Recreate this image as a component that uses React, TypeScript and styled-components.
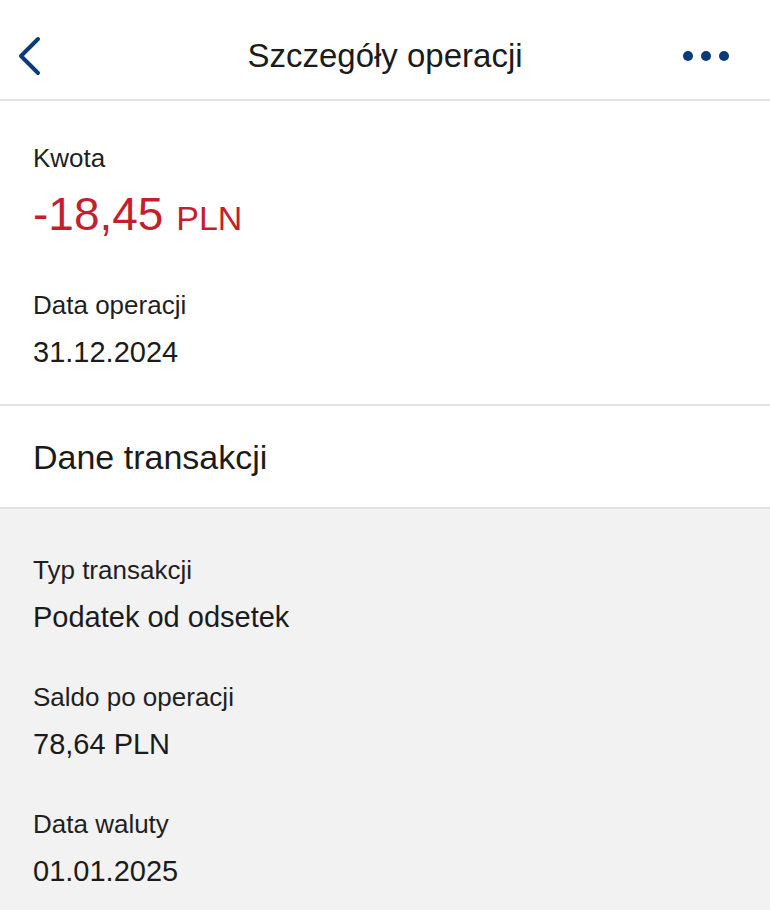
import styled, { createGlobalStyle } from "styled-components";

const GlobalStyle = createGlobalStyle`
  html, body {
    margin: 0;
    padding: 0;
    background: #ffffff;
  }
  body {
    font-family: "Liberation Sans", Arial, sans-serif;
    color: #1b1b1b;
  }
`;

type Field = { label: string; value: string };

const transactionFields: Field[] = [
  { label: "Typ transakcji", value: "Podatek od odsetek" },
  { label: "Saldo po operacji", value: "78,64 PLN" },
  { label: "Data waluty", value: "01.01.2025" },
];

export default function App() {
  return (
    <Page>
      <GlobalStyle />

      {/* nagłówek */}
      <Header>
        <BackButton aria-label="Wstecz">
          <svg width="28" height="40" viewBox="0 0 28 40" fill="none">
            <path
              d="M22 3 L5 20 L22 37"
              stroke="#0b3a78"
              strokeWidth="4"
              strokeLinecap="round"
              strokeLinejoin="round"
            />
          </svg>
        </BackButton>
        <Title>Szczegóły operacji</Title>
        <MoreButton aria-label="Więcej">
          <Dot />
          <Dot />
          <Dot />
        </MoreButton>
      </Header>

      {/* kwota i data */}
      <Summary>
        <FieldList $gap={46}>
          <FieldItem>
            <Label>Kwota</Label>
            <Amount>
              -18,45 <Currency>PLN</Currency>
            </Amount>
          </FieldItem>
          <FieldItem>
            <Label>Data operacji</Label>
            <Value>31.12.2024</Value>
          </FieldItem>
        </FieldList>
      </Summary>

      <SectionHeading>Dane transakcji</SectionHeading>

      {/* dane transakcji */}
      <Details>
        <FieldList $gap={48}>
          {transactionFields.map((f) => (
            <FieldItem key={f.label}>
              <Label>{f.label}</Label>
              <Value>{f.value}</Value>
            </FieldItem>
          ))}
        </FieldList>
      </Details>
    </Page>
  );
}

const Page = styled.div`
  min-height: 100vh;
  display: flex;
  flex-direction: column;
`;

const Header = styled.header`
  box-sizing: border-box;
  height: 101px;
  padding: 12px 16px 0;
  display: grid;
  grid-template-columns: 1fr auto 1fr;
  align-items: center;
  border-bottom: 2px solid #e2e2e2;
`;

const BackButton = styled.button`
  justify-self: start;
  background: none;
  border: none;
  padding: 0;
  width: 28px;
  height: 40px;
  display: flex;
  cursor: pointer;
`;

const Title = styled.h1`
  margin: 0;
  font-size: 33px;
  line-height: 40px;
  font-weight: 400;
  color: #1b1b1b;
`;

const MoreButton = styled.button`
  justify-self: end;
  background: none;
  border: none;
  padding: 0 25px 0 0;
  display: flex;
  gap: 8px;
  cursor: pointer;
`;

const Dot = styled.span`
  width: 10px;
  height: 10px;
  border-radius: 50%;
  background: #0b3a78;
`;

const Summary = styled.section`
  padding: 42px 33px 35px;
  border-bottom: 2px solid #e2e2e2;
`;

const FieldList = styled.div<{ $gap: number }>`
  display: flex;
  flex-direction: column;
  gap: ${(p) => p.$gap}px;
`;

const FieldItem = styled.div`
  display: flex;
  flex-direction: column;
  gap: 15px;
`;

const Label = styled.div`
  font-size: 26px;
  line-height: 30px;
  color: #1f1f1f;
`;

const Value = styled.div`
  font-size: 29px;
  line-height: 34px;
  color: #1b1b1b;
`;

const Amount = styled.div`
  font-size: 46px;
  line-height: 52px;
  color: #c41f2f;
`;

const Currency = styled.span`
  font-size: 34px;
`;

const SectionHeading = styled.h2`
  margin: 0;
  padding: 31px 33px 30px;
  font-size: 34px;
  line-height: 40px;
  font-weight: 400;
  color: #1b1b1b;
  border-bottom: 2px solid #e2e2e2;
`;

const Details = styled.section`
  flex: 1;
  background: #f2f2f2;
  padding: 46px 33px 24px;
`;
